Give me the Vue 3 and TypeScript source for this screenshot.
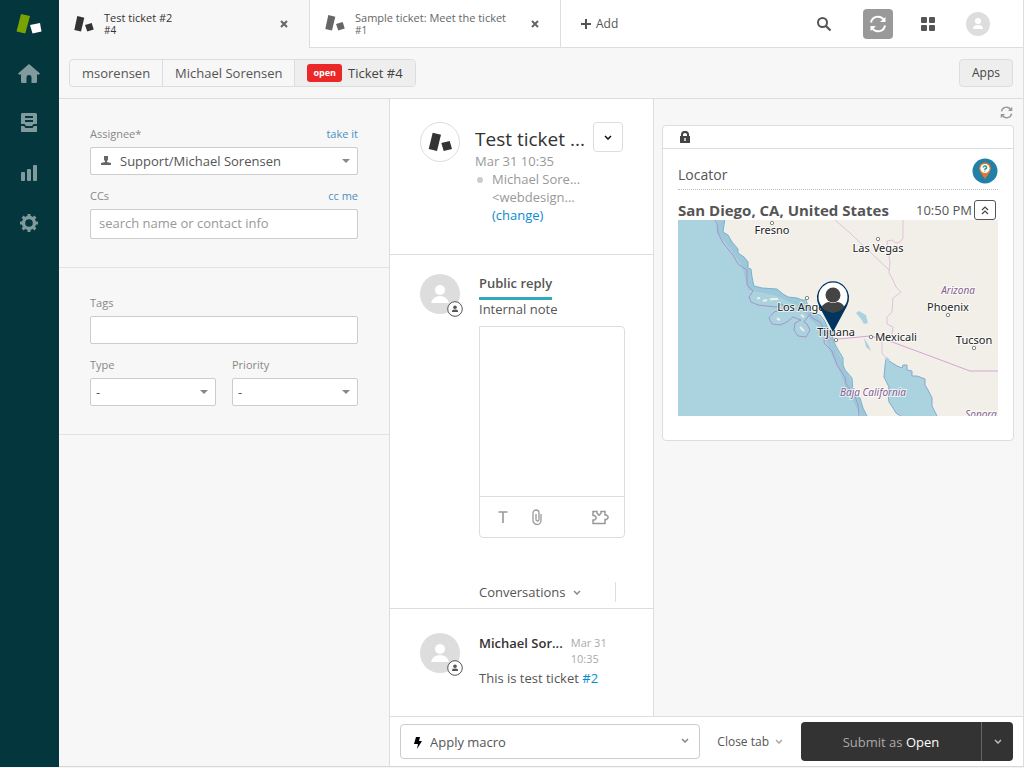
<script setup lang="ts">
import { ref } from 'vue'

interface Tab { id: string; title: string; active: boolean }
interface City { name: string; x: number; y: number; dotX: number; dotY: number }

const tabs = ref<Tab[]>([
  { id: '#4', title: 'Test ticket #2', active: true },
  { id: '#1', title: 'Sample ticket: Meet the ticket', active: false },
])

const cities: City[] = [
  { name: 'Fresno', x: 94, y: 14, dotX: 94, dotY: 3 },
  { name: 'Las Vegas', x: 200, y: 32, dotX: 200, dotY: 19 },
  { name: 'Phoenix', x: 270, y: 91, dotX: 270, dotY: 95 },
  { name: 'Tucson', x: 296, y: 124, dotX: 296, dotY: 128 },
  { name: 'Los Angeles', x: 130, y: 91, dotX: 129, dotY: 78 },
  { name: 'Tijuana', x: 158, y: 116, dotX: 158, dotY: 120 },
  { name: 'Mexicali', x: 218, y: 121, dotX: 193, dotY: 117 },
]

const assignee = ref('Support/Michael Sorensen')
const ccs = ref('')
const tags = ref('')
const type = ref('-')
const priority = ref('-')
const reply = ref('')
const macro = ref('Apply macro')
</script>

<template>
  <div class="app">
    <nav class="rail" aria-label="Main">
      <a href="#" class="brand" aria-label="Support">
        <svg width="26" height="22" viewBox="0 0 26 22">
          <path d="M5 1 14 3 9.300 20.500 .5 18.500Z" fill="#78a300" />
          <path d="M14 12 24 10 25.500 18.500 16.500 20.500Z" fill="#fff" />
        </svg>
      </a>
      <a href="#" aria-label="Home">
        <svg width="22" height="19" viewBox="0 0 22 19"><path d="M11 0 22 9.500 20.500 11 19 10V17.500Q19 19 17.500 19H13.500V13Q13.500 11 11 11T8.500 13V19H4.500Q3 19 3 17.500V10L1.500 11 0 9.500Z" /></svg>
      </a>
      <a href="#" aria-label="Views">
        <svg width="18" height="20" viewBox="0 0 18 20"><path fill-rule="evenodd" d="M2 0H15.500Q17 0 17 1.500V11H13.500L12 13H6L4.500 11H1V1.500Q1 0 2 0ZM5 3V5H13V3ZM5 7V9H13V7Z" /><path d="M1 13H4L5.500 15H12.500L14 13H17V18.500Q17 19 16.500 19H1.500Q1 19 1 18.500Z" /></svg>
      </a>
      <a href="#" aria-label="Reporting">
        <svg width="18" height="18" viewBox="0 0 18 18"><rect x="1" y="8" width="4" height="9" rx="1" /><rect x="7" y="5" width="4" height="12" rx="1" /><rect x="13" y="1" width="4" height="16" rx="1" /></svg>
      </a>
      <a href="#" aria-label="Admin">
        <svg width="20" height="20" viewBox="0 0 20 20">
          <circle cx="10" cy="10" r="5.500" fill="none" stroke="currentColor" stroke-width="3.400" />
          <g stroke="currentColor" stroke-width="3"><path d="M10 1V4M10 16V19M1 10H4M16 10H19M3.600 3.600 5.500 5.500M14.500 14.500 16.400 16.400M3.600 16.400 5.500 14.500M14.500 5.500 16.400 3.600" /></g>
        </svg>
      </a>
    </nav>

    <div class="shell">
      <header class="topbar">
        <div v-for="tab in tabs" :key="tab.id" class="tab" :class="{ active: tab.active }">
          <svg class="tab-logo" width="20" height="17" viewBox="0 0 20 17"><path d="M3.300 0 10.300 1.700 7 15.600 .3 13.900Z" /><path d="M11 9 17.700 7 19.700 13.600 13.300 15.600Z" /></svg>
          <a href="#" class="tab-text"><span>{{ tab.title }}</span><span class="tab-id">{{ tab.id }}</span></a>
          <button class="plain close" type="button" :aria-label="'Close ' + tab.title">
            <svg width="8" height="8" viewBox="0 0 8 8"><path d="M1 1 7 7M7 1 1 7" stroke="currentColor" stroke-width="2" /></svg>
          </button>
        </div>
        <button class="plain add" type="button">
          <svg width="10" height="10" viewBox="0 0 10 10"><path d="M5 0V10M0 5H10" stroke="currentColor" stroke-width="2" /></svg>
          Add
        </button>
        <div class="tools">
          <button class="plain" type="button" aria-label="Search">
            <svg width="16" height="16" viewBox="0 0 16 16" fill="none" stroke="#555"><circle cx="6.500" cy="6.500" r="4.500" stroke-width="2" /><path d="M10 10 14.500 14.500" stroke-width="2.200" /></svg>
          </button>
          <button class="plain sync" type="button" aria-label="Refresh">
            <svg width="18" height="18" viewBox="0 0 18 18"><path d="M2 7.500A7 7 0 0 1 14.500 4.500M16 10.500A7 7 0 0 1 3.500 13.500" fill="none" stroke="#fff" stroke-width="2" /><path d="M16.500 2V7H11ZM1.500 16V11H7Z" fill="#fff" /></svg>
          </button>
          <button class="plain" type="button" aria-label="Products">
            <svg width="14" height="14" viewBox="0 0 14 14" fill="#555"><rect width="6" height="6" rx="1" /><rect x="8" width="6" height="6" rx="1" /><rect y="8" width="6" height="6" rx="1" /><rect x="8" y="8" width="6" height="6" rx="1" /></svg>
          </button>
          <button class="plain profile" type="button" aria-label="Profile">
            <svg width="24" height="24" viewBox="0 0 24 24"><circle cx="12" cy="12" r="12" fill="#ddd" /><circle cx="12" cy="9" r="3" fill="#fff" /><path d="M7 17Q7 13 12 13T17 17Z" fill="#fff" /></svg>
          </button>
        </div>
      </header>

      <div class="crumbbar">
        <div class="crumbs">
          <a href="#">msorensen</a>
          <a href="#">Michael Sorensen</a>
          <a href="#" class="current"><span class="badge">open</span>Ticket #4</a>
        </div>
        <button class="apps" type="button">Apps</button>
      </div>

      <main class="work">
        <form class="fields" @submit.prevent>
          <section>
            <div class="field">
              <div class="label-row"><label for="assignee">Assignee*</label><a href="#">take it</a></div>
              <div class="select with-icon">
                <svg class="lead" width="10" height="9" viewBox="0 0 10 9"><path d="M3 0H7V4L6 5V6L10 7V9H0V7L4 6V5L3 4Z" fill="#666" /></svg>
                <select id="assignee" v-model="assignee"><option>Support/Michael Sorensen</option></select>
                <svg class="caret" width="8" height="4" viewBox="0 0 8 4"><path d="M0 0H8L4 4Z" fill="#888" /></svg>
              </div>
            </div>
            <div class="field">
              <div class="label-row"><label for="ccs">CCs</label><a href="#">cc me</a></div>
              <input id="ccs" v-model="ccs" class="cc" type="text" placeholder="search name or contact info">
            </div>
          </section>
          <section>
            <div class="field">
              <div class="label-row"><label for="tags">Tags</label></div>
              <input id="tags" v-model="tags" type="text">
            </div>
            <div class="pair">
              <div class="field">
                <div class="label-row"><label for="type">Type</label></div>
                <div class="select">
                  <select id="type" v-model="type"><option>-</option></select>
                  <svg class="caret" width="8" height="4" viewBox="0 0 8 4"><path d="M0 0H8L4 4Z" fill="#888" /></svg>
                </div>
              </div>
              <div class="field">
                <div class="label-row"><label for="priority">Priority</label></div>
                <div class="select">
                  <select id="priority" v-model="priority"><option>-</option></select>
                  <svg class="caret" width="8" height="4" viewBox="0 0 8 4"><path d="M0 0H8L4 4Z" fill="#888" /></svg>
                </div>
              </div>
            </div>
          </section>
        </form>

        <div class="content">
          <div class="columns">
            <section class="ticket">
              <header class="head">
                <div class="logo-ring">
                  <svg width="24" height="20" viewBox="0 0 24 20" fill="#333"><path d="M4.700 .7 13 2.700 9 19 .7 17Z" /><path d="M13.300 11 21.700 9 24 17 15.700 19Z" /></svg>
                </div>
                <div class="head-text">
                  <h1>Test ticket ...</h1>
                  <div class="when">Mar 31 10:35</div>
                  <div class="requester">
                    <span class="dot"></span>
                    <div><div>Michael Sore...</div><div>&lt;webdesign...</div><a href="#">(change)</a></div>
                  </div>
                </div>
                <button class="menu" type="button" aria-label="Ticket options">
                  <svg width="8" height="5" viewBox="0 0 8 5"><path d="M1 1 4 4 7 1" fill="none" stroke="#111" stroke-width="1.500" /></svg>
                </button>
              </header>

              <div class="compose">
                <div class="avatar">
                  <svg width="40" height="40" viewBox="0 0 40 40"><circle cx="20" cy="20" r="20" fill="#ddd" /><circle cx="20" cy="16" r="5" fill="#fff" /><path d="M11 29Q13 22 20 22T29 29Z" fill="#fff" /></svg>
                  <svg class="role" width="16" height="16" viewBox="0 0 16 16"><circle cx="8" cy="8" r="7.300" fill="#fff" stroke="#555" /><circle cx="8" cy="6.200" r="1.800" fill="#555" /><path d="M5 11V9.500Q5 8.500 8 8.500T11 9.500V11Z" fill="#555" /></svg>
                </div>
                <div class="editor-col">
                  <button class="plain mode on" type="button">Public reply</button>
                  <button class="plain mode" type="button">Internal note</button>
                  <div class="editor">
                    <textarea v-model="reply" aria-label="Public reply"></textarea>
                    <div class="editor-tools">
                      <button class="plain" type="button" aria-label="Text formatting">
                        <svg width="10" height="12" viewBox="0 0 10 12"><path d="M.5 1H9.500M5 1V12" stroke="currentColor" stroke-width="1.600" /></svg>
                      </button>
                      <button class="plain" type="button" aria-label="Attach file">
                        <svg width="10" height="16" viewBox="0 0 10 16" fill="none" stroke="currentColor" stroke-width="1.300"><path d="M9 5V11.500A4 4 0 0 1 1 11.500V4A3 3 0 0 1 7 4V10.500A1.500 1.500 0 0 1 4 10.500V5" /></svg>
                      </button>
                      <button class="plain push" type="button" aria-label="Apps">
                        <svg width="17" height="15" viewBox="0 0 17 15" fill="none" stroke="currentColor" stroke-width="1.500"><path d="M1 1.500H5V3L6.500 5H7.500L9 3V1.500H13V5H14.500L16 6.500V8L14.500 9.500H13V13.500H1V10H2.500L4 8.500V7L2.500 5.500H1Z" /></svg>
                      </button>
                    </div>
                  </div>
                  <div class="conv-row">
                    <button class="plain conv" type="button">Conversations
                      <svg width="8" height="5" viewBox="0 0 8 5"><path d="M1 1 4 4 7 1" fill="none" stroke="#888" stroke-width="1.500" /></svg>
                    </button>
                    <span class="rule"></span>
                  </div>
                </div>
              </div>

              <article class="message">
                <div class="avatar">
                  <svg width="40" height="40" viewBox="0 0 40 40"><circle cx="20" cy="20" r="20" fill="#ddd" /><circle cx="20" cy="16" r="5" fill="#fff" /><path d="M11 29Q13 22 20 22T29 29Z" fill="#fff" /></svg>
                  <svg class="role" width="16" height="16" viewBox="0 0 16 16"><circle cx="8" cy="8" r="7.300" fill="#fff" stroke="#555" /><circle cx="8" cy="6.200" r="1.800" fill="#555" /><path d="M5 11V9.500Q5 8.500 8 8.500T11 9.500V11Z" fill="#555" /></svg>
                </div>
                <div class="msg-body">
                  <div class="msg-head"><strong>Michael Sor...</strong><time>Mar 31<br>10:35</time></div>
                  <p>This is test ticket <a href="#">#2</a></p>
                </div>
              </article>
            </section>

            <aside class="side">
              <button class="plain reload" type="button" aria-label="Reload apps">
                <svg width="13" height="13" viewBox="0 0 18 18"><path d="M2 7.500A7 7 0 0 1 14.500 4.500M16 10.500A7 7 0 0 1 3.500 13.500" fill="none" stroke="#999" stroke-width="2" /><path d="M17 1V7H11ZM1 17V11H7Z" fill="#999" /></svg>
              </button>
              <div class="card">
                <div class="card-top">
                  <svg width="10" height="12" viewBox="0 0 10 12"><path d="M2 6V3.500A3 2.600 0 0 1 8 3.500V6" fill="none" stroke="#444" stroke-width="2" /><path fill-rule="evenodd" d="M0 5H10V12H0ZM4.300 7V10H5.700V7Z" fill="#444" /></svg>
                </div>
                <div class="card-body">
                  <div class="card-title">
                    <h2>Locator</h2>
                    <svg width="26" height="26" viewBox="0 0 26 26"><circle cx="13" cy="13" r="12.500" fill="#2080a8" /><path d="M13 21Q7 13 7 10.500A6 6 0 0 1 19 10.500Q19 13 13 21Z" fill="#e87530" /><circle cx="13" cy="10.500" r="4.600" fill="#fff" /><path d="M11.300 9.500Q11.500 7.700 13.200 8T14.500 10.200L13 11.200V12M12.800 12.700V13.600" fill="none" stroke="#20a090" stroke-width="1.500" /></svg>
                  </div>
                  <div class="place">
                    <strong>San Diego, CA, United States</strong>
                    <span class="clock">10:50 PM</span>
                    <button class="fold" type="button" aria-label="Collapse">
                      <svg width="8" height="9" viewBox="0 0 8 9" fill="none" stroke="#444" stroke-width="1.200"><path d="M1 4 4 1 7 4M1 8 4 5 7 8" /></svg>
                    </button>
                  </div>
                  <svg class="map" viewBox="0 0 320 196" role="img" aria-label="Map of San Diego and surroundings">
                    <rect width="320" height="196" fill="#aad3df" />
                    <path class="shallow" d="M43 0 43 12 53 24 67 44 73 67 98 72 124 84 132 94 148 109 155 130 164 148 172 168 187 196" />
                    <path class="land" d="M47 -2 45 12 50 15 54 22 60 29 60 33 66 37 70 42 70 48 73 49 74 57 75 62 76 66 84 68 99 69 105 74 110 77 119 78 124 80 128 80 132 92 142 95 146 100 150 108 154 112 155 120 159 128 165 138 165 145 167 150 174 158 175 172 182 178 185 188 190 198H322V-2Z" />
                    <path class="gulf" d="M208 139 207 146 206 157 211 167 210 174 211 182 215 188 218 193 226 198H260L254 186 254 178 250 170 247 165 247 159 239 156 234 156 234 151 229 150 229 145 225 145 224 148 219 146 211 141Z" />
                    <path class="pond" d="M178 93 181 91 188 95 190 103 186 104 183 99ZM186 118 191 126 193 131 188 127ZM207 139 209 137 212 140 210 143Z" />
                    <path class="isle" d="M79 78.500 82 78M85 81 89 80M92 79.500 95 79 100 79M99 98.500 102 100M123 95 126 97M122 107 126 111" />
                    <path class="sea-line" d="M37 0 39 4 40 13 45 23 55 35 60 44 69 50 69 65 75 71 71 77 73 82 80 85 98 87 104 84 107 89 96 92 91 98 94 104 102 105 109 102 115 97 123 100 117 103 116 110 120 116 128 117 132 110 129 104 126 102 132 94 134 98 142 102 147 111 146 123 154 131 159 145 167 157 168 164 177 176 180 185 181 196" />
                    <path class="state-line" d="M157 0 172 13 211 50M225 0 225 18 222 22 218 23 214 20 209 21 210 31 212 42 211 53 215 60 218 67 223 72 215 78 214 92 209 97 209 104 215 107 214 114 204 119 204 133 208 138" />
                    <path class="nation-line" d="M145 120 160 119 192 116 206 119 252 136 292 151H320" />
                    <g v-for="c in cities" :key="c.name">
                      <circle :cx="c.dotX" :cy="c.dotY" r="1.700" fill="#fff" stroke="#666" stroke-width=".8" />
                      <text class="city" :x="c.x" :y="c.y">{{ c.name }}</text>
                    </g>
                    <text class="region" x="280" y="74">Arizona</text>
                    <text class="region" x="195" y="176">Baja California</text>
                    <text class="region" x="303" y="198">Sonora</text>
                    <path d="M155 112 141 86Q136 75 143 67A15.500 15.500 0 0 1 167 67Q174 75 169 86Z" fill="#00355f" />
                    <circle cx="155" cy="77" r="14.500" fill="#fff" />
                    <path d="M144 86Q148 82 151 82Q155 84 159 82Q163 82 166 86Q167 90 155 93Q143 90 144 86Z" fill="#444" />
                    <circle cx="155" cy="75" r="7.500" fill="#444" />
                  </svg>
                </div>
              </div>
            </aside>
          </div>

          <footer class="footer">
            <div class="macro">
              <svg class="bolt" width="8" height="12" viewBox="0 0 8 12"><path d="M2 0H6L5 4H8L3 12 4 7H0Z" fill="#000" /></svg>
              <select v-model="macro" aria-label="Apply macro"><option>Apply macro</option></select>
              <svg class="caret" width="8" height="5" viewBox="0 0 8 5"><path d="M1 1 4 4 7 1" fill="none" stroke="#888" stroke-width="1.500" /></svg>
            </div>
            <button class="plain close-tab" type="button">Close tab
              <svg width="8" height="5" viewBox="0 0 8 5"><path d="M1 1 4 4 7 1" fill="none" stroke="#aaa" stroke-width="1.500" /></svg>
            </button>
            <div class="submit">
              <button type="button" class="submit-main">Submit as <b>Open</b></button>
              <button type="button" class="submit-more" aria-label="Submit options">
                <svg width="8" height="5" viewBox="0 0 8 5"><path d="M1 1 4 4 7 1" fill="none" stroke="#bbb" stroke-width="1.500" /></svg>
              </button>
            </div>
          </footer>
        </div>
      </main>
    </div>
  </div>
</template>

<style>
body { background: #f4f4f4; }
</style>

<style scoped>
* { box-sizing: border-box; }
.app { display: flex; min-height: 100vh; padding-bottom: 1px; font: 13px/18px "Open Sans", "Noto Sans", sans-serif; color: #555; }
svg { display: block; flex: none; }
a { color: #0a8ad0; text-decoration: none; }
button, input, select, textarea { font: inherit; color: inherit; }
.plain { display: flex; align-items: center; padding: 0; border: 0; background: none; }

.rail { display: flex; flex: none; flex-direction: column; width: 59px; background: #03363d; }
.rail a { display: flex; align-items: center; justify-content: center; width: 58px; height: 50px; color: #819a9e; }
.rail .brand { height: 48px; }
.rail svg { fill: currentColor; }

.shell { display: flex; flex: 1; flex-direction: column; min-width: 0; border-right: 1px solid #ddd; border-bottom: 1px solid #d8d8d8; background: #fff; }
.topbar { display: flex; height: 48px; border-bottom: 1px solid #ddd; }
.tab { display: flex; align-items: center; width: 251px; height: 46px; padding: 0 21px 0 15px; border-right: 1px solid #ddd; box-shadow: 1px 0 0 transparent; font-size: 11px; line-height: 13px; color: #666; }
.tab { height: auto; }
.tab.active { height: 48px; background: #f7f7f7; color: #333; }
.tab svg { fill: currentColor; }
.tab-text { display: flex; flex: 1; flex-direction: column; margin-left: 10px; color: inherit; white-space: nowrap; }
.tab-id { font-size: 10px; }
.close { color: #666; }
.add { gap: 5px; margin-left: 20px; font-size: 12px; }
.tools { display: flex; align-items: center; gap: 28px; margin-left: auto; padding-right: 33px; }
.sync { justify-content: center; width: 30px; height: 30px; margin-left: 3px; border-radius: 4px; background: #999; }
.profile { margin-left: 3px; }

.crumbbar { display: flex; align-items: center; justify-content: space-between; height: 51px; padding: 0 10px; border-bottom: 1px solid #ddd; background: #f7f7f7; }
.crumbs { display: flex; overflow: hidden; height: 28px; border: 1px solid #ddd; border-radius: 4px; }
.crumbs a { display: flex; align-items: center; padding: 0 12px; color: #555; }
.crumbs a + a { border-left: 1px solid #ddd; }
.crumbs .current { gap: 6px; background: #eee; color: #444; }
.badge { padding: 0 6px; border-radius: 3px; background: #eb2828; color: #fff; font-size: 9px; font-weight: 700; }
.apps { height: 28px; padding: 0 12px; border: 1px solid #ddd; border-radius: 4px; background: #eee; font-size: 12px; color: #444; }

.work { display: flex; flex: 1; min-height: 0; }
.fields { flex: none; width: 331px; border-right: 1px solid #ddd; background: #f7f7f7; }
.fields section { padding: 25px 31px 28px; border-bottom: 1px solid #e3e3e3; }
.field + .field, .pair { margin-top: 11px; }
.label-row { display: flex; justify-content: space-between; height: 23px; padding-top: 1px; font-size: 11px; color: #888; }
.label-row a { color: #4b90be; }
.select { position: relative; }
.select select, .fields input { display: block; width: 100%; height: 28px; padding: 0 8px; border: 1px solid #ccc; border-radius: 2px; background: #fff; outline: 0; }
.select select, .macro select { appearance: none; }
.select select { padding: 0 20px 0 5px; }
.with-icon select { padding-left: 29px; }
.fields input.cc { height: 30px; padding-bottom: 2px; }
input::placeholder { color: #999; opacity: 1; }
.lead { position: absolute; left: 11px; top: 9px; }
.caret { position: absolute; right: 8px; top: 12px; pointer-events: none; }
.pair { display: grid; grid-template-columns: 1fr 1fr; gap: 16px; }
.pair .field { margin-top: 0; }

.content { display: flex; flex: 1; flex-direction: column; min-width: 0; }
.columns { display: flex; flex: 1; }
.ticket { display: flex; flex: 1; flex-direction: column; min-width: 0; }
.head { display: flex; height: 156px; padding: 23px 30px 0; border-bottom: 1px solid #ddd; }
.logo-ring { display: flex; flex: none; align-items: center; justify-content: center; width: 40px; height: 40px; border: 1px solid #ddd; border-radius: 50%; }
.head-text { flex: 1; min-width: 0; margin-left: 15px; color: #999; white-space: nowrap; }
h1 { margin: 4px 0 0; font-size: 19px; line-height: 26px; font-weight: 500; color: #333; }
.requester { display: flex; gap: 9px; }
.dot { width: 6px; height: 6px; margin: 7px 0 0 2px; border-radius: 50%; background: #ccc; }
.menu { display: flex; flex: none; align-items: center; justify-content: center; width: 30px; height: 30px; padding: 0; border: 1px solid #ddd; border-radius: 4px; background: #fff; }

.compose { display: flex; padding: 19px 28px 0 30px; border-bottom: 1px solid #ddd; }
.avatar { position: relative; flex: none; width: 40px; height: 40px; }
.role { position: absolute; right: -3px; bottom: -3px; }
.editor-col { flex: 1; min-width: 0; margin-left: 19px; }
.mode { height: 18px; }
.mode.on { height: 26px; padding-bottom: 6px; border-bottom: 3px solid #30aabc; font-weight: 600; }
.editor { display: flex; flex-direction: column; height: 212px; margin-top: 8px; border: 1px solid #ddd; border-radius: 0 4px 4px 4px; }
.editor textarea { flex: 1; width: 100%; border: 0; outline: 0; background: none; resize: none; }
.editor-tools { display: flex; align-items: center; gap: 24px; height: 41px; padding: 0 15px 0 18px; border-top: 1px solid #ddd; color: #999; }
.push { margin-left: auto; }
.conv-row { display: flex; justify-content: space-between; margin-top: 44px; padding: 0 9px 6px 0; }
.conv { gap: 8px; }
.rule { width: 1px; height: 20px; background: #ddd; }

.message { display: flex; padding: 24px 30px 0; }
.msg-body { flex: 1; min-width: 0; margin-left: 19px; white-space: nowrap; }
.msg-head { display: flex; gap: 8px; }
.msg-head strong { line-height: 20px; font-weight: 600; color: #333; }
.msg-head time { margin-top: 2px; font-size: 11px; line-height: 16px; color: #aaa; }
.msg-body p { margin: 2px 0 0; }

.side { flex: none; width: 370px; padding: 7px 9px 0 8px; border-left: 1px solid #ddd; background: #f7f7f7; }
.reload { margin: 0 1px 6px auto; }
.card { border: 1px solid #ddd; border-radius: 4px; background: #fff; }
.card-top { display: flex; align-items: center; height: 23px; padding: 0 17px; border-bottom: 1px solid #ddd; }
.card-body { padding: 9px 15px 24px; }
.card-title { display: flex; justify-content: space-between; height: 32px; border-bottom: 1px dotted #bbb; }
h2 { margin: 6px 0 0; font-size: 14px; line-height: 22px; font-weight: 400; }
.place { display: flex; align-items: center; height: 20px; margin-top: 10px; white-space: nowrap; }
.place strong { font-size: 15px; font-weight: 700; }
.clock { margin-left: auto; }
.fold { display: flex; align-items: center; justify-content: center; width: 22px; height: 20px; margin: 0 2px; padding: 0; border: 1px solid #555; border-radius: 3px; background: #fff; }
.map { width: 100%; }
.land { fill: #f2efe9; stroke: #75b3cc; stroke-width: 1; }
.shallow { fill: none; stroke: #8fb6d2; stroke-width: 7; opacity: .4; }
.gulf { fill: #aad3df; stroke: #85a8cc; stroke-width: 1; }
.pond { fill: #aad3df; }
.isle { fill: none; stroke: #f2efe9; stroke-width: 2; }
.sea-line { fill: none; stroke: #a596c8; stroke-width: 1; }
.state-line { fill: none; stroke: #dfc3dc; stroke-width: 1; }
.nation-line { fill: none; stroke: #d5a5d1; stroke-width: 1; }
.city, .region { font: 11px "Noto Sans", sans-serif; text-anchor: middle; paint-order: stroke; stroke: #fff; stroke-width: 2px; stroke-opacity: .7; fill: #222; }
.region { font-size: 10px; font-style: italic; fill: #856090; }

.footer { display: flex; align-items: center; height: 50px; padding: 0 10px; border-top: 1px solid #ddd; }
.macro { position: relative; flex: 1; }
.macro select { display: block; width: 100%; height: 35px; padding: 0 29px; border: 1px solid #ccc; border-radius: 4px; background: #fff; }
.bolt { position: absolute; left: 14px; top: 13px; }
.macro .caret { right: 11px; top: 14px; }
.close-tab { gap: 6px; margin: 0 18px 0 17px; font-size: 12px; }
.submit { display: flex; overflow: hidden; height: 39px; border-radius: 4px; }
.submit button { border: 0; background: #333; color: #aaa; }
.submit-main { width: 180px; }
.submit-main b { font-weight: 400; color: #fff; }
.submit .submit-more { display: flex; align-items: center; justify-content: center; width: 32px; padding: 0; border-left: 1px solid #666; }
</style>
